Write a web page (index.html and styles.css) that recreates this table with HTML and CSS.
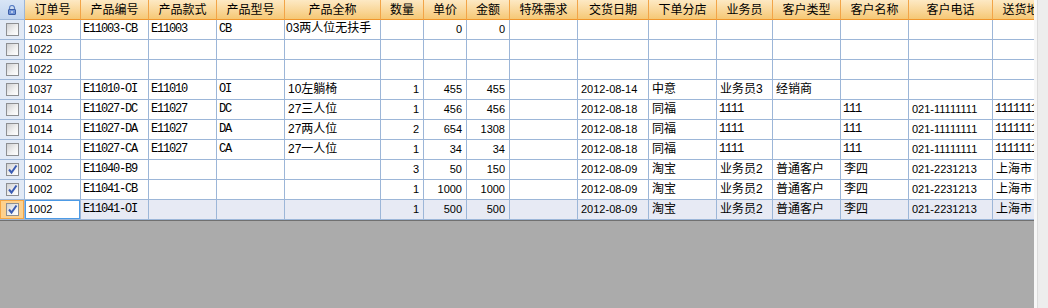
FILE: index.html
```html
<!DOCTYPE html>
<html>
<head>
<meta charset="utf-8">
<link rel="stylesheet" href="styles.css">
</head>
<body>
<div class="app">
  <div class="grid">
    <div class="row head">
      <div class="c c0 hc0"><svg class="lock" width="8" height="10" viewBox="0 0 8 10"><path d="M1.5 4.5V3a2.5 2.5 0 0 1 5 0v1.5" fill="none" stroke="#5a7fc4" stroke-width="1.2"/><rect x="0.5" y="4.5" width="7" height="5" rx="0.5" fill="#6f93d6" stroke="#3d5fa8"/><rect x="3.5" y="6" width="1" height="2" fill="#fff"/></svg></div>
      <div class="c c1">订单号</div>
      <div class="c c2">产品编号</div>
      <div class="c c3">产品款式</div>
      <div class="c c4">产品型号</div>
      <div class="c c5">产品全称</div>
      <div class="c c6">数量</div>
      <div class="c c7">单价</div>
      <div class="c c8">金额</div>
      <div class="c c9">特殊需求</div>
      <div class="c c10">交货日期</div>
      <div class="c c11">下单分店</div>
      <div class="c c12">业务员</div>
      <div class="c c13">客户类型</div>
      <div class="c c14">客户名称</div>
      <div class="c c15">客户电话</div>
      <div class="c c16">送货地址</div>
    </div>

    <div class="row">
      <div class="c c0"><span class="cb"></span></div>
      <div class="c c1 n">1023</div>
      <div class="c c2 m">E11003-CB</div>
      <div class="c c3 m">E11003</div>
      <div class="c c4 m">CB</div>
      <div class="c c5 top">03两人位无扶手</div>
      <div class="c c6 n r"></div>
      <div class="c c7 n r">0</div>
      <div class="c c8 n r">0</div>
      <div class="c c9"></div>
      <div class="c c10"></div>
      <div class="c c11"></div>
      <div class="c c12"></div>
      <div class="c c13"></div>
      <div class="c c14"></div>
      <div class="c c15"></div>
      <div class="c c16"></div>
    </div>

    <div class="row">
      <div class="c c0"><span class="cb"></span></div>
      <div class="c c1 n">1022</div>
      <div class="c c2"></div><div class="c c3"></div><div class="c c4"></div><div class="c c5"></div>
      <div class="c c6"></div><div class="c c7"></div><div class="c c8"></div><div class="c c9"></div>
      <div class="c c10"></div><div class="c c11"></div><div class="c c12"></div><div class="c c13"></div>
      <div class="c c14"></div><div class="c c15"></div><div class="c c16"></div>
    </div>

    <div class="row">
      <div class="c c0"><span class="cb"></span></div>
      <div class="c c1 n">1022</div>
      <div class="c c2"></div><div class="c c3"></div><div class="c c4"></div><div class="c c5"></div>
      <div class="c c6"></div><div class="c c7"></div><div class="c c8"></div><div class="c c9"></div>
      <div class="c c10"></div><div class="c c11"></div><div class="c c12"></div><div class="c c13"></div>
      <div class="c c14"></div><div class="c c15"></div><div class="c c16"></div>
    </div>

    <div class="row">
      <div class="c c0"><span class="cb"></span></div>
      <div class="c c1 n">1037</div>
      <div class="c c2 m">E11010-OI</div>
      <div class="c c3 m">E11010</div>
      <div class="c c4 m">OI</div>
      <div class="c c5">10左躺椅</div>
      <div class="c c6 n r">1</div>
      <div class="c c7 n r">455</div>
      <div class="c c8 n r">455</div>
      <div class="c c9"></div>
      <div class="c c10 n">2012-08-14</div>
      <div class="c c11">中意</div>
      <div class="c c12">业务员3</div>
      <div class="c c13">经销商</div>
      <div class="c c14"></div>
      <div class="c c15"></div>
      <div class="c c16"></div>
    </div>

    <div class="row">
      <div class="c c0"><span class="cb"></span></div>
      <div class="c c1 n">1014</div>
      <div class="c c2 m">E11027-DC</div>
      <div class="c c3 m">E11027</div>
      <div class="c c4 m">DC</div>
      <div class="c c5">27三人位</div>
      <div class="c c6 n r">1</div>
      <div class="c c7 n r">456</div>
      <div class="c c8 n r">456</div>
      <div class="c c9"></div>
      <div class="c c10 n">2012-08-18</div>
      <div class="c c11">同福</div>
      <div class="c c12 m">1111</div>
      <div class="c c13"></div>
      <div class="c c14 m">111</div>
      <div class="c c15 n">021-11111111</div>
      <div class="c c16 m">11111111</div>
    </div>

    <div class="row">
      <div class="c c0"><span class="cb"></span></div>
      <div class="c c1 n">1014</div>
      <div class="c c2 m">E11027-DA</div>
      <div class="c c3 m">E11027</div>
      <div class="c c4 m">DA</div>
      <div class="c c5">27两人位</div>
      <div class="c c6 n r">2</div>
      <div class="c c7 n r">654</div>
      <div class="c c8 n r">1308</div>
      <div class="c c9"></div>
      <div class="c c10 n">2012-08-18</div>
      <div class="c c11">同福</div>
      <div class="c c12 m">1111</div>
      <div class="c c13"></div>
      <div class="c c14 m">111</div>
      <div class="c c15 n">021-11111111</div>
      <div class="c c16 m">11111111</div>
    </div>

    <div class="row">
      <div class="c c0"><span class="cb"></span></div>
      <div class="c c1 n">1014</div>
      <div class="c c2 m">E11027-CA</div>
      <div class="c c3 m">E11027</div>
      <div class="c c4 m">CA</div>
      <div class="c c5">27一人位</div>
      <div class="c c6 n r">1</div>
      <div class="c c7 n r">34</div>
      <div class="c c8 n r">34</div>
      <div class="c c9"></div>
      <div class="c c10 n">2012-08-18</div>
      <div class="c c11">同福</div>
      <div class="c c12 m">1111</div>
      <div class="c c13"></div>
      <div class="c c14 m">111</div>
      <div class="c c15 n">021-11111111</div>
      <div class="c c16 m">11111111</div>
    </div>

    <div class="row">
      <div class="c c0"><span class="cb on"><svg width="11" height="11" viewBox="0 0 11 11"><path d="M2 5.5 L4.5 8.5 L9.5 1.5" fill="none" stroke="#3b5cb3" stroke-width="2"/></svg></span></div>
      <div class="c c1 n">1002</div>
      <div class="c c2 m">E11040-B9</div>
      <div class="c c3"></div>
      <div class="c c4"></div>
      <div class="c c5"></div>
      <div class="c c6 n r">3</div>
      <div class="c c7 n r">50</div>
      <div class="c c8 n r">150</div>
      <div class="c c9"></div>
      <div class="c c10 n">2012-08-09</div>
      <div class="c c11">淘宝</div>
      <div class="c c12">业务员2</div>
      <div class="c c13">普通客户</div>
      <div class="c c14">李四</div>
      <div class="c c15 n">021-2231213</div>
      <div class="c c16">上海市</div>
    </div>

    <div class="row">
      <div class="c c0"><span class="cb on"><svg width="11" height="11" viewBox="0 0 11 11"><path d="M2 5.5 L4.5 8.5 L9.5 1.5" fill="none" stroke="#3b5cb3" stroke-width="2"/></svg></span></div>
      <div class="c c1 n">1002</div>
      <div class="c c2 m">E11041-CB</div>
      <div class="c c3"></div>
      <div class="c c4"></div>
      <div class="c c5"></div>
      <div class="c c6 n r">1</div>
      <div class="c c7 n r">1000</div>
      <div class="c c8 n r">1000</div>
      <div class="c c9"></div>
      <div class="c c10 n">2012-08-09</div>
      <div class="c c11">淘宝</div>
      <div class="c c12">业务员2</div>
      <div class="c c13">普通客户</div>
      <div class="c c14">李四</div>
      <div class="c c15 n">021-2231213</div>
      <div class="c c16">上海市</div>
    </div>

    <div class="row sel">
      <div class="c c0 selhead"><span class="cb on"><svg width="11" height="11" viewBox="0 0 11 11"><path d="M2 5.5 L4.5 8.5 L9.5 1.5" fill="none" stroke="#3b5cb3" stroke-width="2"/></svg></span></div>
      <div class="c c1 n cur">1002</div>
      <div class="c c2 m">E11041-OI</div>
      <div class="c c3"></div>
      <div class="c c4"></div>
      <div class="c c5"></div>
      <div class="c c6 n r">1</div>
      <div class="c c7 n r">500</div>
      <div class="c c8 n r">500</div>
      <div class="c c9"></div>
      <div class="c c10 n">2012-08-09</div>
      <div class="c c11">淘宝</div>
      <div class="c c12">业务员2</div>
      <div class="c c13">普通客户</div>
      <div class="c c14">李四</div>
      <div class="c c15 n">021-2231213</div>
      <div class="c c16">上海市</div>
    </div>

    <div class="fill"></div>
  </div>
  <div class="vscroll"></div>
</div>
</body>
</html>
```

FILE: styles.css
```css
html, body {
  margin: 0;
  padding: 0;
  width: 1048px;
  height: 308px;
  overflow: hidden;
  background: #ababab;
  font-family: "Liberation Sans", "Noto Sans CJK SC", sans-serif;
  font-size: 12px;
  color: #000;
}

.app {
  display: flex;
  width: 1048px;
  height: 308px;
}

.grid {
  width: 1034px;
  height: 308px;
  display: flex;
  flex-direction: column;
  overflow: hidden;
  background: #ababab;
}

.vscroll {
  width: 14px;
  height: 308px;
  background: linear-gradient(to right, #f7f7f7 0, #f7f7f7 3px, #dcdcdc 3px, #dcdcdc 4px, #ededed 4px);
}

.row {
  display: flex;
  height: 20px;
  flex: none;
  background: #fff;
}

.c {
  box-sizing: border-box;
  flex: none;
  height: 20px;
  line-height: 19px;
  padding: 0 3px;
  border-right: 1px solid #9cb6d8;
  border-bottom: 1px solid #9cb6d8;
  white-space: nowrap;
  overflow: hidden;
}

.c0 { width: 25px; padding: 0; display: flex; align-items: center; justify-content: center; background: #e2eaf6; }
.c1 { width: 56px; }
.c2 { width: 68px; }
.c3 { width: 68px; }
.c4 { width: 68px; }
.c5 { width: 96px; }
.c6 { width: 43px; }
.c7 { width: 43px; }
.c8 { width: 43px; }
.c9 { width: 68px; }
.c10 { width: 71px; }
.c11 { width: 68px; }
.c12 { width: 56px; }
.c13 { width: 68px; }
.c14 { width: 68px; }
.c15 { width: 84px; }
.c16 { width: 68px; }

.n { font-size: 11px; }
.r { text-align: right; padding-right: 4px; }
.m {
  font-family: "Liberation Mono", monospace;
  font-size: 12px;
  letter-spacing: -1.2px;
  padding-left: 2px;
}
.top { line-height: 16px; padding-left: 1px; }

.head {
  background: linear-gradient(to bottom, #fde9c4 0%, #f9d697 55%, #f5c670 100%);
}
.head .c {
  border-right: 1px solid #f2a447;
  border-bottom: 1px solid #f0962c;
  text-align: center;
  padding: 0;
  font-family: "Noto Sans CJK SC", sans-serif;
  font-size: 12px;
  line-height: 18px;
}
.head .hc0 {
  background: linear-gradient(to bottom, #d8e5f6 0%, #c2d5ee 100%);
  border-right: 1px solid #9cb6d8;
  border-bottom: 1px solid #9cb6d8;
}
.lock { display: block; }

.cb {
  box-sizing: border-box;
  width: 13px;
  height: 13px;
  border: 1px solid #8d8f92;
  background: linear-gradient(135deg, #cfd0d2 0%, #f2f2f2 60%, #ffffff 100%);
  display: flex;
  align-items: center;
  justify-content: center;
}
.cb svg { display: block; }

.sel { background: #e7eaf4; }
.sel .selhead {
  background: #fdd18e;
  box-shadow: inset 0 0 0 1px #f5a644;
}
.sel .cur {
  background: #fff;
  box-shadow: inset 0 0 0 1px #4d9be6;
}

.fill {
  flex: 1;
  background: #ababab;
  border-top: 1px solid #707070;
}
```
